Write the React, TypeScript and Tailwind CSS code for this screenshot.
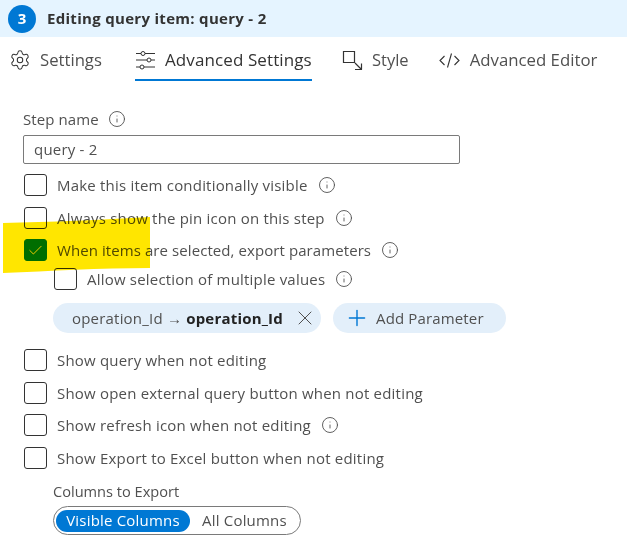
import React from 'react';
import { Check, Info, Plus, Settings, X } from 'lucide-react';

const font = "font-['Open_Sans','Noto_Sans',sans-serif]";

const InfoIcon = () => <Info className="h-[18px] w-[18px] text-[#505050]" strokeWidth={1.2} />;

const Row = ({
  label,
  info,
  checked,
  className = '',
  labelClass = 'tracking-[0.2px]',
}: {
  label: string;
  info?: boolean;
  checked?: boolean;
  className?: string;
  labelClass?: string;
}) => (
  <div className={`flex h-[22px] items-center ${className}`}>
    <div
      className={`ml-[1px] flex h-[22px] w-[23px] shrink-0 items-center justify-center rounded-[3px] border ${
        checked ? 'border-[#007a00] bg-[#007a00]' : 'border-[#333] bg-white'
      }`}
    >
      {checked && <Check className="h-[17px] w-[17px] text-[#ffe600]" strokeWidth={1.3} />}
    </div>
    <span className={`ml-[10px] text-[15px] leading-[22px] whitespace-nowrap text-[#505050] ${labelClass}`}>
      {label}
    </span>
    {info && (
      <span className="ml-[10px]">
        <InfoIcon />
      </span>
    )}
  </div>
);

const SlidersIcon = () => (
  <svg width="21" height="21" viewBox="0 0 21 21" fill="none" stroke="#333" strokeWidth="1">
    <path d="M1 3.5h5M10 3.5h10M1 10h11M16 10h4M1 17h4M9 17h11" />
    <circle cx="8" cy="3.5" r="2" />
    <circle cx="14" cy="10" r="2" />
    <circle cx="7" cy="17" r="2" />
  </svg>
);

const StyleIcon = () => (
  <svg width="22" height="22" viewBox="0 0 22 22" fill="none" stroke="#333" strokeWidth="1.2">
    <path d="M2.5 2.5h11v11h-11z" />
    <path d="M14 20.5h7M20.5 20.5v-6M14 14l6.5 6.5" />
  </svg>
);

const CodeIcon = () => (
  <svg width="21" height="21" viewBox="0 0 21 21" fill="none" stroke="#333" strokeWidth="1.1">
    <path d="M5.5 6L1 10.5 5.5 15M15.5 6L20 10.5 15.5 15M12.5 3.5L8.5 17.5" />
  </svg>
);

const App: React.FC = () => {
  return (
    <div className={`relative h-[551px] w-[627px] overflow-hidden bg-white ${font}`}>
      {/* Step header */}
      <div className="flex h-[37px] items-center bg-[#e5f4ff] pl-[8px]">
        <div className="flex h-[28px] w-[28px] items-center justify-center rounded-full bg-[#0078d4] text-[15px] font-bold text-white">
          3
        </div>
        <span className="ml-[11px] text-[15px] font-bold tracking-[0.3px] text-[#333]">
          Editing query item: query - 2
        </span>
      </div>

      {/* Tabs */}
      <div className="flex h-[45px] items-start pt-[9px] text-[#505050]">
        <div className="ml-[9px] flex h-[28px] w-[126px] items-center">
          <Settings className="h-[22px] w-[22px] text-[#333]" strokeWidth={1.1} />
          <span className="ml-[9px] text-[16.7px]">Settings</span>
        </div>
        <div className="flex h-[35px] w-[177px] items-start border-b-[2px] border-[#0078d4]">
          <div className="flex h-[28px] items-center">
            <SlidersIcon />
            <span className="ml-[9px] text-[17px] font-medium tracking-[0.1px] whitespace-nowrap text-[#333]">
              Advanced Settings
            </span>
          </div>
        </div>
        <div className="ml-[29px] flex h-[28px] items-center">
          <StyleIcon />
          <span className="ml-[9px] text-[16.5px]">Style</span>
        </div>
        <div className="ml-[30px] flex h-[28px] items-center">
          <CodeIcon />
          <span className="ml-[10px] text-[16.8px]">Advanced Editor</span>
        </div>
      </div>

      <div className="pl-[23px]">
        {/* Step name */}
        <div className="mt-[27px] flex h-[20px] items-center text-[15px] tracking-[0.1px] text-[#505050]">
          Step name
          <span className="ml-[9px]">
            <InfoIcon />
          </span>
        </div>
        <div className="mt-[6px] flex h-[29px] w-[437px] items-center rounded-[2px] border border-[#7a7a7a] pl-[10px] text-[15px] tracking-[0.2px] text-[#505050]">
          query - 2
        </div>

        {/* Options */}
        <Row className="mt-[10px]" label="Make this item conditionally visible" info />
        <Row className="mt-[11px]" label="Always show the pin icon on this step" info />
        <Row
          className="mt-[10px]"
          label="When items are selected, export parameters"
          labelClass="tracking-[0.08px]"
          info
          checked
        />
        <Row className="mt-[7px] ml-[30px]" label="Allow selection of multiple values" info />

        {/* Parameter chips */}
        <div className="mt-[13px] ml-[30px] flex items-center gap-[12px]">
          <div className="flex h-[30px] w-[268px] items-center rounded-full bg-[#e3effa] pl-[19px] text-[15px] tracking-[0.2px] whitespace-nowrap text-[#505050]">
            operation_Id →&nbsp;<span className="font-bold text-[#222]">operation_Id</span>
            <X className="ml-[10px] h-[24px] w-[24px] text-[#505050]" strokeWidth={1} />
          </div>
          <div className="flex h-[30px] w-[173px] items-center rounded-full bg-[#e3effa] pl-[11px] text-[15px] tracking-[0.15px] whitespace-nowrap text-[#505050]">
            <Plus className="h-[26px] w-[26px] text-[#0078d4]" strokeWidth={1.3} />
            <span className="ml-[6px]">Add Parameter</span>
          </div>
        </div>

        <Row className="mt-[16px]" label="Show query when not editing" />
        <Row className="mt-[11px]" label="Show open external query button when not editing" />
        <Row className="mt-[10px]" label="Show refresh icon when not editing" info />
        <Row className="mt-[11px]" label="Show Export to Excel button when not editing" />

        {/* Columns to export */}
        <div className="mt-[12px] ml-[30px] text-[14.6px] leading-[20px] text-[#505050]">Columns to Export</div>
        <div className="mt-[5px] ml-[30px] flex h-[29px] w-[248px] items-center rounded-full border border-[#7a7a7a] pl-[2px] text-[15px] tracking-[0.2px] whitespace-nowrap">
          <div className="flex h-[22px] w-[134px] items-center justify-center rounded-full bg-[#0078d4] text-white">
            Visible Columns
          </div>
          <span className="ml-[12px] text-[#505050]">All Columns</span>
        </div>
      </div>

      {/* Yellow marker scribble */}
      <svg className="pointer-events-none absolute top-[215px] left-0 mix-blend-multiply" width="152" height="60">
        <path d="M3 8 C50 7 100 5 150 2 L150 53 C100 53 50 56 3 58 Z" fill="#ffe600" />
      </svg>
    </div>
  );
};

export default App;
